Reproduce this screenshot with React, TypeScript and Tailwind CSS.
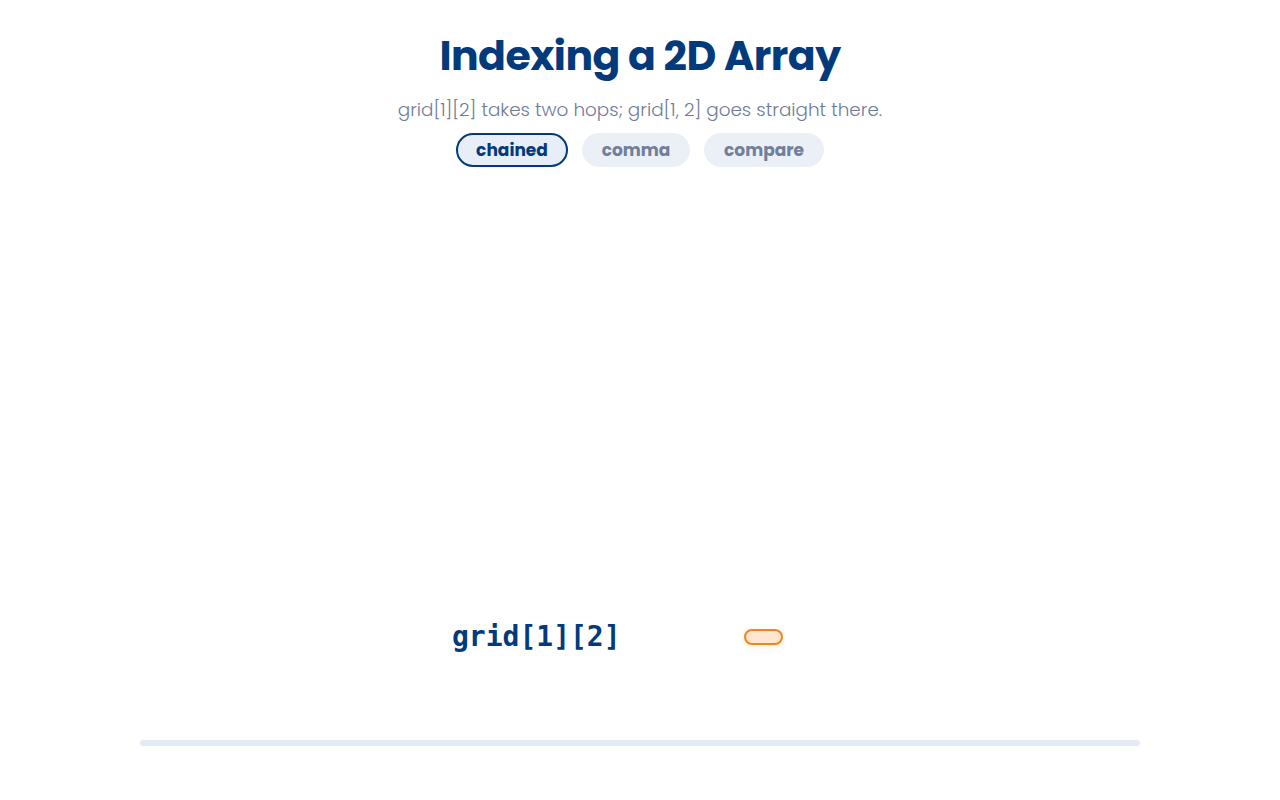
import React, { useState } from 'react';

const modes = ['chained', 'comma', 'compare'] as const;

export default function App() {
  const [mode, setMode] = useState<string>('chained');

  return (
    <div
      className="min-h-[800px] w-full bg-white flex flex-col items-center"
      style={{ fontFamily: 'Poppins, Inter, "Noto Sans", sans-serif' }}
    >
      {/* Header */}
      <h1 className="mt-[28px] text-[41px] leading-[56px] font-bold tracking-[-0.5px] text-[#023a7c]">
        Indexing a 2D Array
      </h1>
      <p className="mt-[13px] text-[18.4px] leading-[26px] font-light text-[#6f7c99]">
        grid[1][2] takes two hops; grid[1, 2] goes straight there.
      </p>

      {/* Mode switch */}
      <div className="mt-[10px] flex items-center gap-[14px]">
        {modes.map(m => (
          <button
            key={m}
            type="button"
            onClick={() => setMode(m)}
            className={`h-[34px] rounded-full text-[17px] font-bold leading-none ${
              m === 'chained' ? 'w-[112px]' : m === 'comma' ? 'w-[108px]' : 'w-[120px]'
            } ${
              mode === m
                ? 'border-2 border-[#023a7c] bg-[#e8eef7] text-[#023a7c]'
                : 'border-2 border-transparent bg-[#ebf0f7] text-[#717f9b]'
            }`}
          >
            {m}
          </button>
        ))}
      </div>

      {/* Stage */}
      <div className="w-[1000px] h-[490px] flex items-end">
        <div className="flex items-center w-full h-[40px]">
          <span
            className="ml-[312px] text-[28px] font-bold text-[#023a7c] leading-none"
            style={{ fontFamily: '"DejaVu Sans Mono", "Liberation Mono", monospace' }}
          >
            grid[1][2]
          </span>
          <div className="ml-[123px] w-[39px] h-[16px] rounded-full border-2 border-[#f0861a] bg-[#fde7d0] shadow-[0_2px_6px_rgba(240,134,26,0.15)]" />
        </div>
      </div>

      {/* Progress track */}
      <div className="mt-[83px] w-[1000px] h-[6px] rounded-full bg-[#e3eaf4]" />
    </div>
  );
}
